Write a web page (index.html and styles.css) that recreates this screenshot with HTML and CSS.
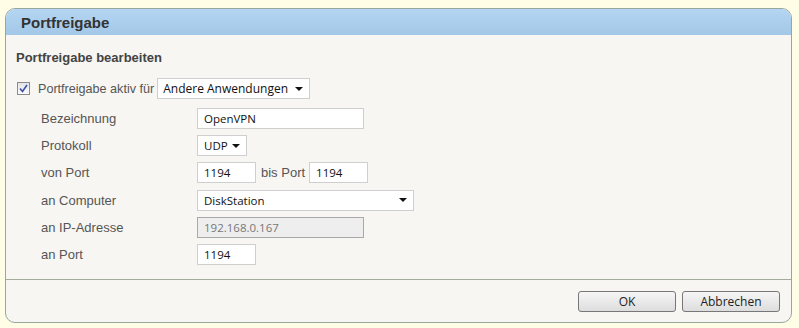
FILE: index.html
```html
<!DOCTYPE html>
<html lang="de">
<head>
  <meta charset="UTF-8">
  <link rel="stylesheet" href="styles.css">
</head>
<body>

<div class="panel">
  <div class="panel-head">Portfreigabe</div>

  <div class="panel-body">
    <div class="section-title">Portfreigabe bearbeiten</div>

    <div class="check-row">
      <span class="checkbox">
        <svg width="9" height="9" viewBox="0 0 9 9"><path d="M1 4.5 L3.5 7.5 L8 1" fill="none" stroke="#3b4fa8" stroke-width="1.6"/></svg>
      </span>
      <span class="check-label">Portfreigabe aktiv für</span>
      <div class="select select-app"><span>Andere Anwendungen</span><span class="arrow"></span></div>
    </div>

    <div class="form">
      <div class="row">
        <span class="label">Bezeichnung</span>
        <div class="field field-long">OpenVPN</div>
      </div>
      <div class="row">
        <span class="label">Protokoll</span>
        <div class="select select-proto"><span>UDP</span><span class="arrow"></span></div>
      </div>
      <div class="row">
        <span class="label">von Port</span>
        <div class="field field-port">1194</div>
        <span class="between">bis Port</span>
        <div class="field field-port">1194</div>
      </div>
      <div class="row">
        <span class="label">an Computer</span>
        <div class="select select-pc"><span>DiskStation</span><span class="arrow"></span></div>
      </div>
      <div class="row">
        <span class="label">an IP-Adresse</span>
        <div class="field field-long disabled">192.168.0.167</div>
      </div>
      <div class="row">
        <span class="label">an Port</span>
        <div class="field field-port">1194</div>
      </div>
    </div>
  </div>

  <div class="panel-foot">
    <button class="btn">OK</button>
    <button class="btn">Abbrechen</button>
  </div>
</div>

</body>
</html>
```

FILE: styles.css
```css
body {
  margin: 0;
  background-color: #fffde6;
  font-family: 'Liberation Sans', Arial, sans-serif;
}

.panel {
  margin: 8px 0 0 5px;
  width: 785px;
  height: 313px;
  border: 1px solid #98a6a0;
  border-radius: 10px;
  background-color: #f7f6f2;
  display: flex;
  flex-direction: column;
  overflow: hidden;
}

.panel-head {
  height: 26px;
  line-height: 27px;
  padding-left: 15px;
  font-size: 15px;
  font-weight: bold;
  color: #333333;
  background: linear-gradient(#b4d6f2, #a3c7e7);
}

.panel-body {
  flex: 1;
  padding: 15px 0 0 10px;
  border-bottom: 1px solid #a3ab9b;
}

.section-title {
  font-size: 13px;
  font-weight: bold;
  color: #444444;
  height: 16px;
  line-height: 16px;
}

.check-row {
  display: flex;
  align-items: center;
  margin-top: 12px;
  height: 21px;
  font-size: 13px;
  color: #555555;
}

.checkbox {
  width: 11px;
  height: 11px;
  border: 1px solid #8b8b8b;
  background: linear-gradient(#e4e4e4, #fbfbfb);
  display: flex;
  align-items: center;
  justify-content: center;
  margin-left: 1px;
}

.check-label {
  margin-left: 8px;
  margin-right: 3px;
  font-size: 12.6px;
}

.select, .field {
  box-sizing: border-box;
  height: 21px;
  border: 1px solid #cfcfcf;
  background-color: #ffffff;
  font-family: 'Open Sans', 'Noto Sans', sans-serif;
  font-size: 11.5px;
  color: #111111;
  display: flex;
  align-items: center;
  padding-left: 6px;
}

.select .arrow {
  margin-left: auto;
  margin-right: 6px;
  width: 0;
  height: 0;
  border-left: 4px solid transparent;
  border-right: 4px solid transparent;
  border-top: 4px solid #111111;
}

.select-app {
  width: 153px;
  font-size: 12px;
  padding-left: 5px;
}

.select-proto {
  width: 50px;
}

.select-pc {
  width: 217px;
}

.form {
  margin-top: 9px;
  padding-left: 25px;
  display: flex;
  flex-direction: column;
  gap: 6.2px;
}

.row {
  display: flex;
  align-items: center;
  height: 21px;
  font-size: 13px;
  color: #555555;
}

.label {
  width: 156px;
}

.field-long {
  width: 167px;
}

.field-port {
  width: 59px;
}

.between {
  margin: 0 4px 0 5px;
}

.disabled {
  background-color: #eeeeee;
  border-color: #a9a9a9;
  color: #777777;
}

.panel-foot {
  height: 42px;
  display: flex;
  justify-content: flex-end;
  align-items: flex-start;
  gap: 6px;
  padding: 11px 11px 0 0;
  box-sizing: border-box;
}

.btn {
  width: 98px;
  height: 21px;
  border: 1px solid #777777;
  border-radius: 3px;
  background: linear-gradient(#f6f6f6, #dddddd);
  font-family: 'Open Sans', 'Noto Sans', sans-serif;
  font-size: 12px;
  color: #222222;
  padding: 0;
}
```
